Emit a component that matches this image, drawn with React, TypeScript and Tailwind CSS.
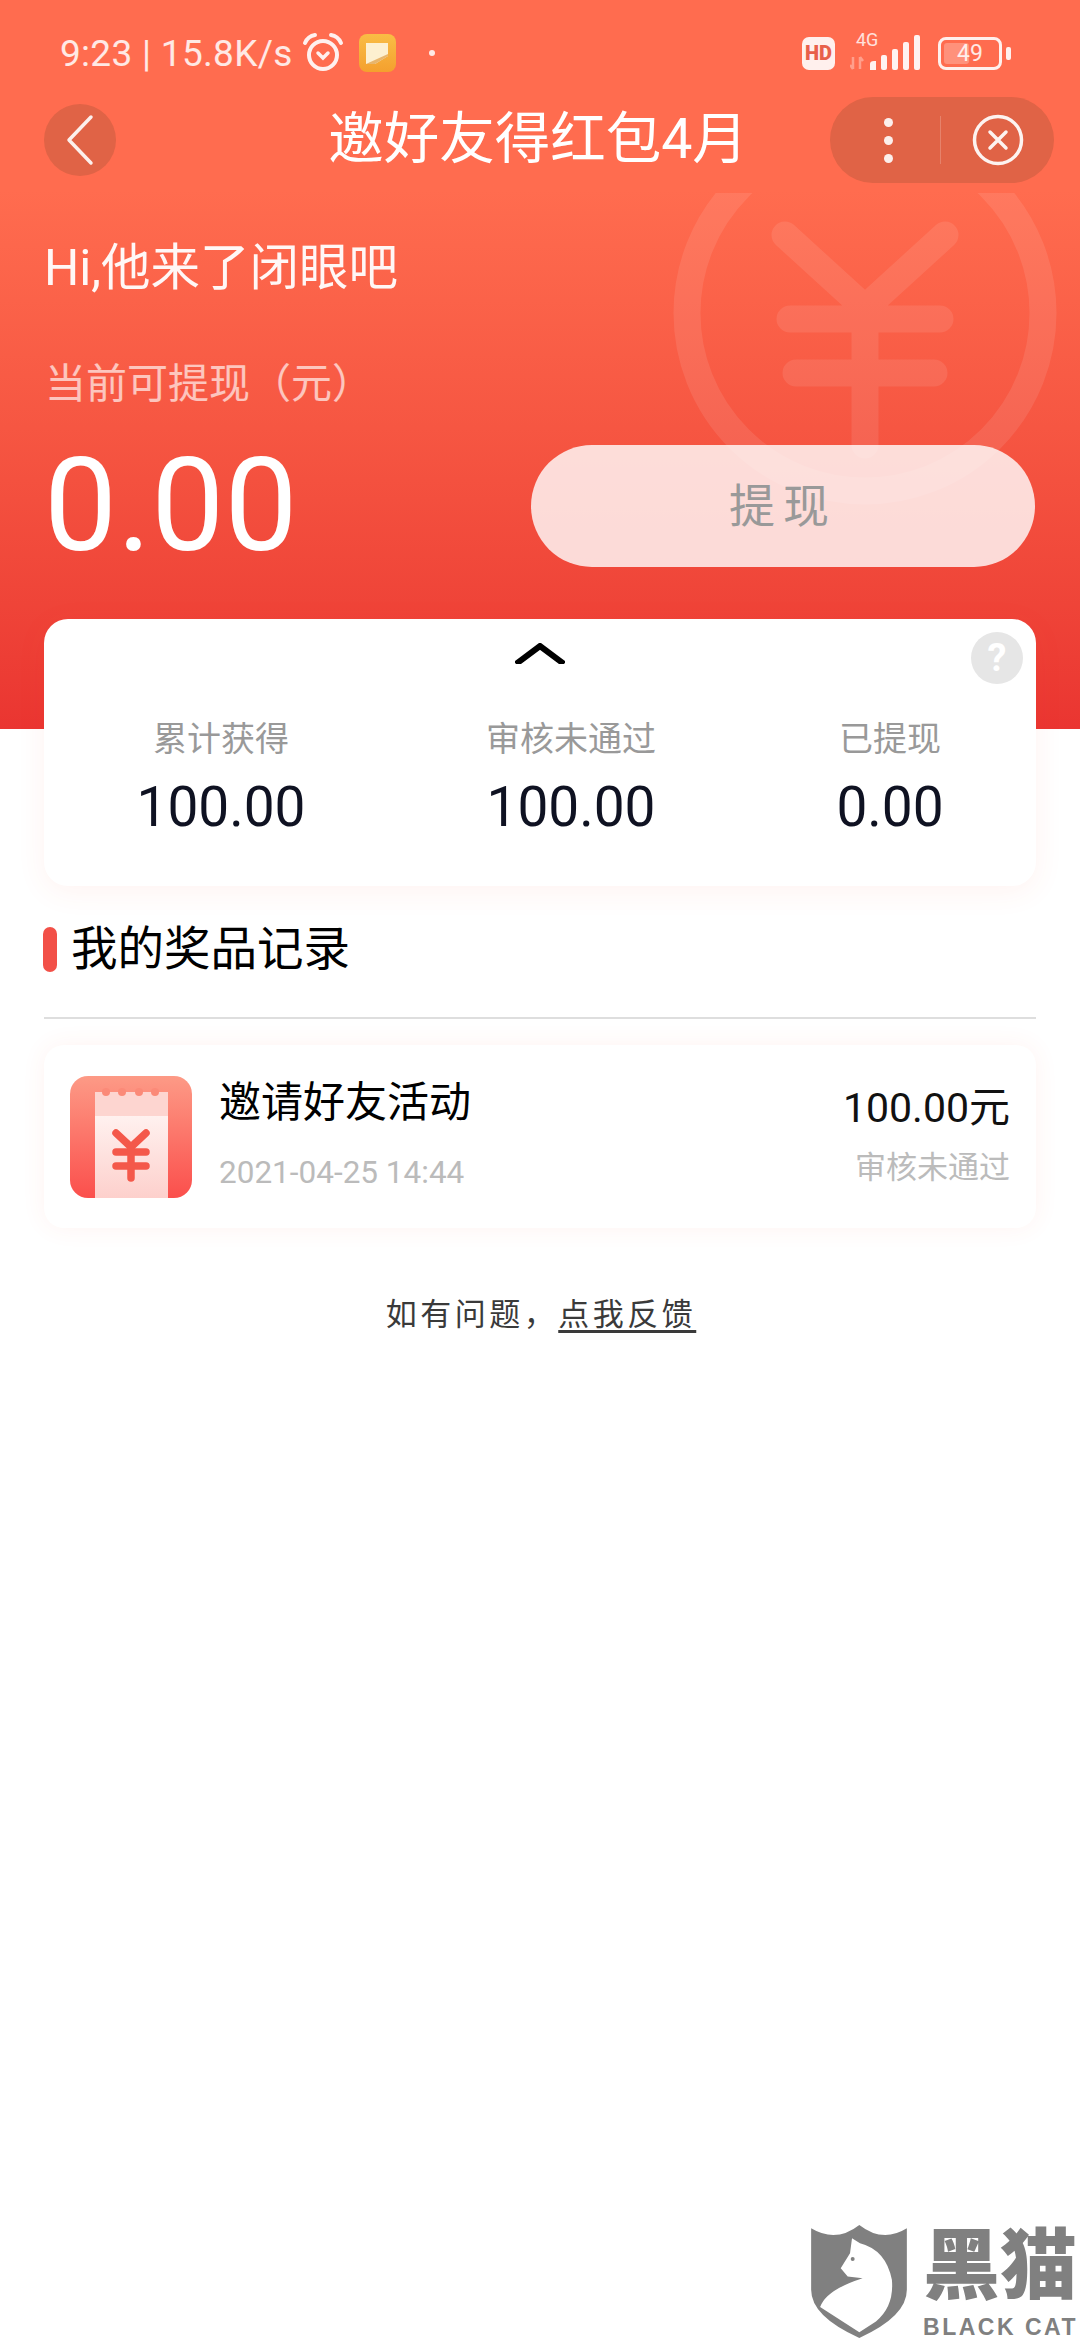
import React from 'react';

const stats = [
  { label: '累计获得', value: '100.00' },
  { label: '审核未通过', value: '100.00' },
  { label: '已提现', value: '0.00' },
];

const AlarmIcon = () => (
  <svg width="42" height="42" viewBox="0 0 42 42" fill="none" stroke="#fff" strokeOpacity="0.9" strokeLinecap="round">
    <circle cx="21" cy="23" r="14" strokeWidth="4" />
    <path d="M3 11 Q6 4 13 3" strokeWidth="4" />
    <path d="M39 11 Q36 4 29 3" strokeWidth="4" />
    <path d="M16 21 L21 26 L26 21" strokeWidth="3.5" />
  </svg>
);

const NoteIcon = () => (
  <div className="flex h-[38px] w-[37px] items-center justify-center rounded-[8px] bg-gradient-to-b from-[#f9bd45] to-[#f4a02e]">
    <svg width="24" height="24" viewBox="0 0 24 24">
      <path d="M1 2 H23 V15 L10 23 H1 Z" fill="#fdf0d0" />
      <path d="M1 23 L23 13 L23 15 L10 23 Z" fill="#e8b56c" />
    </svg>
  </div>
);

const SignalIcon = () => (
  <div className="relative h-[36px] w-[72px]">
    <span className="absolute left-[6px] top-[-4px] text-[18px] leading-[18px] text-white/80">4G</span>
    <svg className="absolute left-0 top-0" width="72" height="36" viewBox="0 0 72 36" fill="#fff">
      <path d="M3 22 V34 M3 34 L0 30 M10 22 V34 M10 22 L13 26" stroke="#fff" strokeOpacity="0.35" strokeWidth="2.5" fill="none" />
      <path d="M20 29 Q20 26 24 26 H26 V35 H20 Z" fillOpacity="0.92" />
      <rect x="31" y="20" width="6" height="15" rx="2" fillOpacity="0.92" />
      <rect x="42" y="14" width="6" height="21" rx="2" fillOpacity="0.92" />
      <rect x="53" y="7" width="6" height="28" rx="2" fillOpacity="0.92" />
      <rect x="64" y="0" width="6" height="35" rx="2" fillOpacity="0.92" />
    </svg>
  </div>
);

const BatteryIcon = () => (
  <div className="flex items-center gap-[4px]">
    <div className="relative h-[33px] w-[64px] rounded-[8px] border-[3px] border-white/90 p-[3px]">
      <div className="h-full w-[49%] rounded-[3px] bg-white/25" />
      <span className="absolute inset-0 flex items-center justify-center text-[23px] leading-none text-white/85">49</span>
    </div>
    <div className="h-[13px] w-[5px] rounded-[2px] bg-white/90" />
  </div>
);

const CoinMark = () => (
  <svg className="absolute left-[660px] top-[193px]" width="420" height="330" viewBox="0 0 420 330" fill="none" stroke="#fff" strokeWidth="27" strokeLinecap="round" opacity="0.09">
    <circle cx="205" cy="120" r="178" strokeLinecap="butt" />
    <path d="M125 42 L205 115 L285 42 M130 126 H280 M136 180 H274 M205 115 V252" />
  </svg>
);

const ReceiptIcon = () => (
  <svg width="122" height="122" viewBox="0 0 122 122">
    <defs>
      <linearGradient id="receiptBg" x1="0" y1="0" x2="0" y2="1">
        <stop offset="0" stopColor="#fd9a86" />
        <stop offset="1" stopColor="#fb4f4c" />
      </linearGradient>
      <linearGradient id="receiptPaper" x1="0" y1="0" x2="0" y2="1">
        <stop offset="0" stopColor="#fff1ef" />
        <stop offset="1" stopColor="#fdd0cc" />
      </linearGradient>
    </defs>
    <rect width="122" height="122" rx="18" fill="url(#receiptBg)" />
    <rect x="25" y="16" width="73" height="24" fill="#fdd5d0" />
    <rect x="25" y="40" width="73" height="82" fill="url(#receiptPaper)" />
    <g fill="#fb8a78">
      <circle cx="36" cy="16" r="4" />
      <circle cx="52" cy="16" r="4" />
      <circle cx="69" cy="16" r="4" />
      <circle cx="85" cy="16" r="4" />
    </g>
    <g fill="none" stroke="#f4584a" strokeWidth="7.5" strokeLinecap="round">
      <path d="M46 57 L61 71 L76 57" />
      <path d="M46 76 H76" />
      <path d="M46 90 H76" />
      <path d="M61 71 V102" />
    </g>
  </svg>
);

const BlackCatLogo = () => (
  <div className="absolute bottom-[2px] right-[2px] flex items-start gap-[16px] text-[#808080]">
    <svg width="96" height="113" viewBox="95 75 288 340">
      <path d="M95 85 Q170 130 240 75 Q310 130 383 85 V270 Q383 350 240 415 Q95 350 95 270 Z" fill="#808080" />
      <path d="M218 115 L242 130 Q320 150 338 240 Q345 320 290 365 L240 398 L122 322 Q140 270 250 235 L205 230 L184 205 L212 160 Z" fill="#fff" />
      <circle cx="220" cy="177" r="6" fill="#808080" />
    </svg>
    <div className="flex flex-col items-start pt-[2px]">
      <span className="text-[77px] font-black leading-[80px]">黑猫</span>
      <span className="mt-[9px] font-['Liberation_Sans',sans-serif] text-[23px] font-bold leading-[22px] tracking-[2.5px]">BLACK CAT</span>
    </div>
  </div>
);

export default function App() {
  return (
    <div className="relative min-h-[2340px] w-[1080px] overflow-hidden bg-white font-['Roboto','Noto_Sans_CJK_SC',sans-serif]">
      {/* Red header */}
      <div className="relative h-[729px] bg-gradient-to-b from-[#ff6c4f] from-[26%] to-[#ea3531] text-white">
        <CoinMark />

        {/* Status bar */}
        <div className="relative flex h-[92px] items-center pl-[60px] pr-[69px] pt-[14px]">
          <span className="text-[37px] leading-none tracking-[0.3px] text-white/85">9:23 | 15.8K/s</span>
          <div className="ml-[9px]"><AlarmIcon /></div>
          <div className="ml-[15px]"><NoteIcon /></div>
          <div className="ml-[33px] h-[6px] w-[6px] rounded-full bg-white/85" />
          <div className="ml-auto flex h-[33px] w-[33px] items-center justify-center rounded-[7px] bg-white/90 text-[20px] font-black leading-none text-[#e8604a]">HD</div>
          <div className="ml-[15px]"><SignalIcon /></div>
          <div className="ml-[16px]"><BatteryIcon /></div>
        </div>

        {/* Nav */}
        <div className="relative flex h-[96px] items-center pl-[44px] pr-[26px]">
          <div className="flex h-[72px] w-[72px] items-center justify-center rounded-full bg-[#e06346]">
            <svg width="30" height="52" viewBox="0 0 30 52" fill="none" stroke="#fff" strokeOpacity="0.9" strokeWidth="3.5" strokeLinecap="round" strokeLinejoin="round">
              <path d="M26 3 L4 26 L26 49" />
            </svg>
          </div>
          <div className="flex-1 pl-[130px] text-center text-[55.5px] leading-none">邀好友得红包4月</div>
          <div className="flex h-[86px] w-[224px] items-center rounded-full bg-[#e06346]">
            <div className="flex w-[110px] flex-col items-center gap-[9px] pl-[6px]">
              <span className="h-[9px] w-[9px] rounded-full bg-white/90" />
              <span className="h-[9px] w-[9px] rounded-full bg-white/90" />
              <span className="h-[9px] w-[9px] rounded-full bg-white/90" />
            </div>
            <div className="h-[48px] w-px bg-white/20" />
            <div className="flex flex-1 items-center justify-center">
              <svg width="52" height="52" viewBox="0 0 52 52" fill="none" stroke="#fff" strokeOpacity="0.92" strokeWidth="3.5" strokeLinecap="round">
                <circle cx="26" cy="26" r="23.5" />
                <path d="M18 18 L34 34 M34 18 L18 34" />
              </svg>
            </div>
          </div>
        </div>

        {/* Balance */}
        <div className="relative">
          <div className="mt-[50px] pl-[44px] text-[49.5px] leading-[60px] text-white/95">Hi,他来了闭眼吧</div>
          <div className="mt-[61px] pl-[45px] text-[41px] leading-[50px] text-white/65">当前可提现（元）</div>
          <div className="mt-[36px] flex items-center justify-between pl-[44px] pr-[45px]">
            <span className="text-[130px] leading-[122px]">0.00</span>
            <div className="flex h-[122px] w-[504px] items-center justify-center rounded-full bg-white/80 text-[46px] tracking-[8px] text-[#999]">提现</div>
          </div>
        </div>
      </div>

      {/* Body */}
      <div className="relative -mt-[110px] px-[44px]">
        <div className="relative h-[267px] rounded-[24px] bg-white pt-[24px] shadow-[0_6px_30px_rgba(255,80,60,0.07)]">
          <svg className="ml-[471px]" width="50" height="21" viewBox="0 0 50 21" fill="none" stroke="#000" strokeWidth="6">
            <path d="M1 21 L25 3 L49 21" />
          </svg>
          <div className="absolute right-[13px] top-[13px] flex h-[52px] w-[52px] items-center justify-center rounded-full bg-[#e6e6e6] text-[38px] font-bold leading-none text-white">?</div>
          <div className="mt-[53px] grid grid-cols-[354px_346px_292px] text-center">
            {stats.map(s => (
              <div key={s.label}>
                <div className="text-[34px] leading-[44px] text-[#999]">{s.label}</div>
                <div className="mt-[15px] text-[55px] leading-[62px] text-[#0f1222]">{s.value}</div>
              </div>
            ))}
          </div>
        </div>

        {/* Records */}
        <div className="mt-[38px] flex h-[50px] items-center gap-[14px]">
          <div className="-ml-px h-[45px] w-[14px] rounded-full bg-[#f25048]" />
          <span className="text-[46.5px] leading-none text-black">我的奖品记录</span>
        </div>
        <div className="mt-[43px] h-[2px] bg-[#dedede]" />

        <div className="mt-[26px] flex h-[183px] items-center rounded-[20px] bg-white px-[26px] shadow-[0_0_24px_rgba(255,80,60,0.07)]">
          <ReceiptIcon />
          <div className="ml-[27px] flex-1">
            <div className="-mt-[4px] text-[42px] leading-[52px] text-black">邀请好友活动</div>
            <div className="mt-[24px] text-[31.5px] leading-[40px] text-[#bbb]">2021-04-25 14:44</div>
          </div>
          <div className="text-right">
            <div className="-mt-[4px] text-[41px] leading-[52px] text-[#111]">100.00元</div>
            <div className="mt-[14px] text-[31px] leading-[40px] text-[#bbb]">审核未通过</div>
          </div>
        </div>

        <div className="mt-[65px] pl-[2px] text-center text-[31px] leading-[44px] tracking-[3.5px] text-[#3a3a3a]">
          如有问题，<span className="underline decoration-[3px] underline-offset-[5px]">点我反馈</span>
        </div>
      </div>

      <BlackCatLogo />
    </div>
  );
}
